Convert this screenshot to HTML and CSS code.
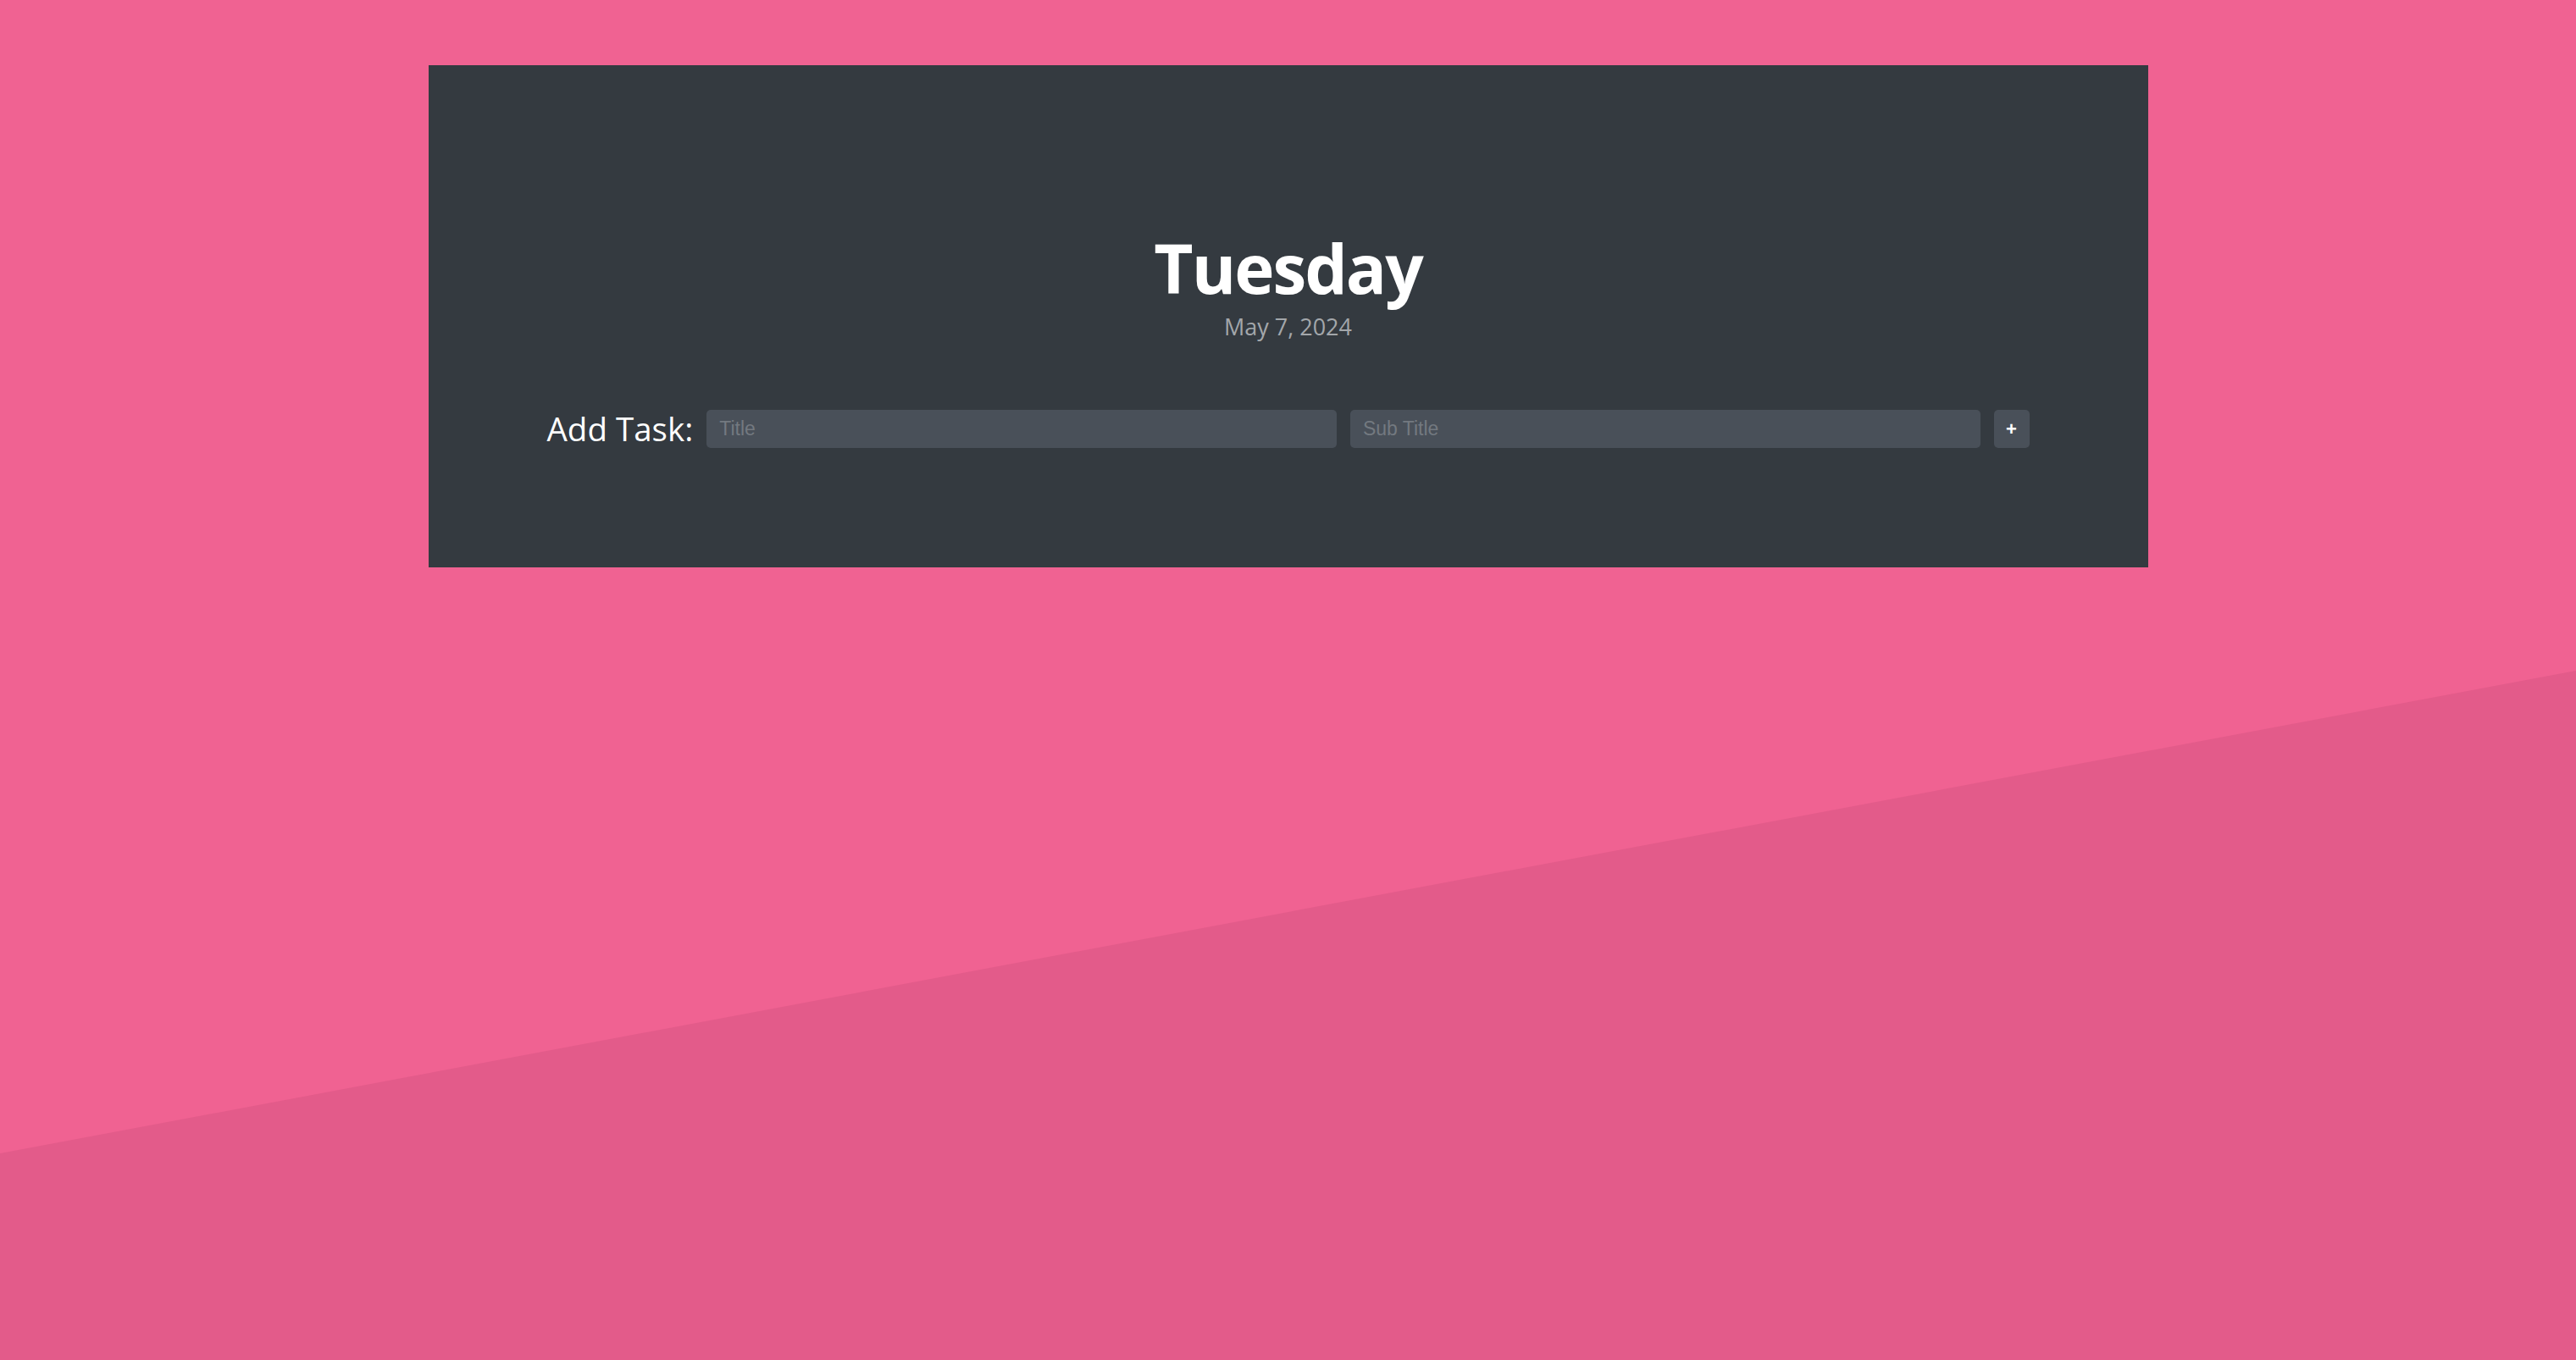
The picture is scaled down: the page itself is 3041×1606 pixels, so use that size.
FILE: index.html
```html
<!DOCTYPE html>
<html lang="en">
<head>
<meta charset="utf-8">
<title>Tasks</title>
<link rel="stylesheet" href="styles.css">
</head>
<body>
<div class="backdrop"></div>
<main class="card">
  <header class="day-head">
    <h1 class="day">Tuesday</h1>
    <p class="date">May 7, 2024</p>
  </header>
  <form class="add-row">
    <label class="add-label">Add Task:</label>
    <input class="field" type="text" placeholder="Title">
    <input class="field" type="text" placeholder="Sub Title">
    <button class="add-btn" type="button">+</button>
  </form>
</main>
</body>
</html>
```

FILE: styles.css
```css
html, body {
  margin: 0;
  padding: 0;
}
body {
  background: #f06292;
  min-height: 1606px;
  position: relative;
  overflow: hidden;
  font-family: "Open Sans", "Noto Sans", sans-serif;
  padding-top: 77px;
  box-sizing: border-box;
}
.backdrop {
  position: absolute;
  left: 0;
  top: 0;
  width: 100%;
  height: 1606px;
  background: #e35b8a;
  clip-path: polygon(0 1362px, 100% 792px, 100% 100%, 0 100%);
  z-index: 0;
}
.card {
  position: relative;
  z-index: 1;
  width: 2030px;
  height: 593px;
  margin: 0 auto;
  background: #343a40;
  box-sizing: border-box;
  padding-top: 199px;
  display: flex;
  flex-direction: column;
  align-items: center;
}
.day-head {
  display: flex;
  flex-direction: column;
  align-items: center;
}
.day {
  margin: 0;
  color: #ffffff;
  font-weight: 700;
  font-size: 80px;
  line-height: 80px;
  letter-spacing: -2px;
}
.date {
  margin: 0;
  margin-top: 14px;
  color: #a3a7ab;
  font-size: 27px;
  line-height: 32px;
}
.add-row {
  margin-top: 82px;
  display: flex;
  align-items: center;
  gap: 16px;
  width: 1750px;
}
.add-label {
  color: #ffffff;
  font-size: 38.5px;
  line-height: 45px;
  font-weight: 400;
  white-space: nowrap;
}
.field {
  flex: 1;
  height: 45px;
  box-sizing: border-box;
  border: none;
  border-radius: 5px;
  background: #495059;
  color: #ced4da;
  padding: 0 15px;
  font-family: "Liberation Sans", Arial, sans-serif;
  font-size: 23px;
  outline: none;
}
.field::placeholder {
  color: #737980;
}
.add-btn {
  width: 42px;
  height: 45px;
  border: none;
  border-radius: 5px;
  background: #495059;
  color: #ffffff;
  font-family: "Liberation Sans", Arial, sans-serif;
  font-size: 22px;
  font-weight: 700;
  padding: 0;
  flex: none;
}
```
